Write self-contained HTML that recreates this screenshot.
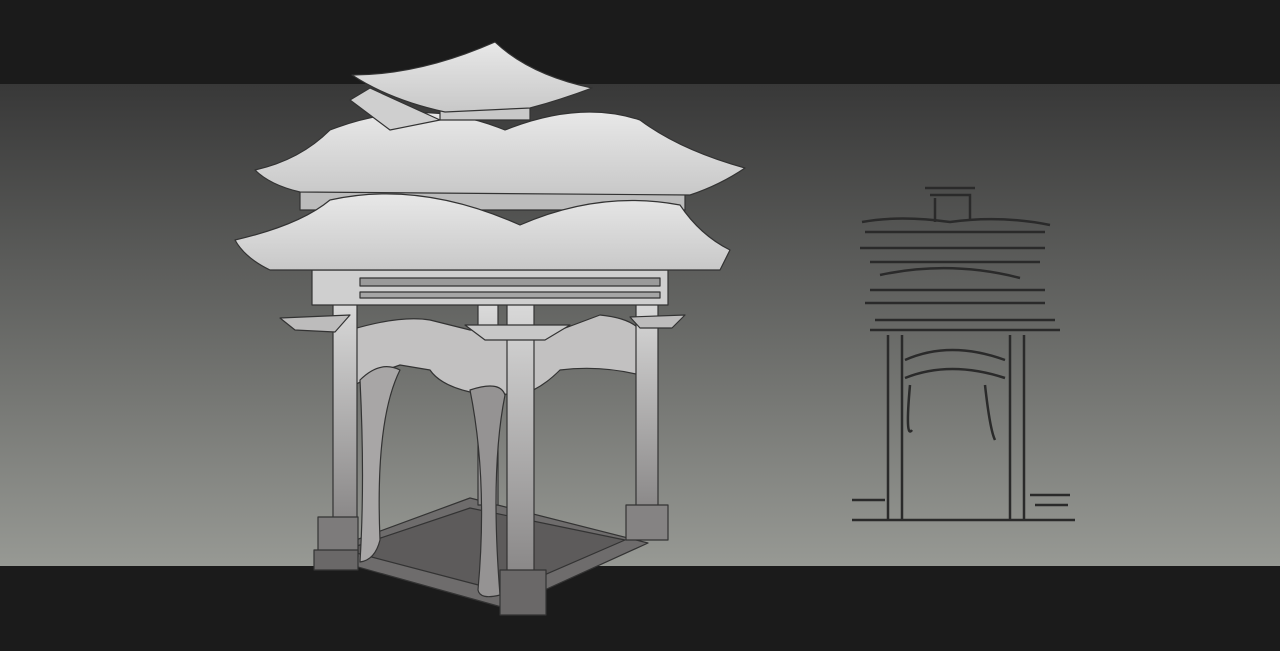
<!DOCTYPE html>
<html><head><meta charset="utf-8"><style>
html,body{margin:0;padding:0;background:#1b1b1b;width:1280px;height:651px;overflow:hidden}
svg{display:block}
</style></head><body>
<svg width="1280" height="651" viewBox="0 0 1280 651" xmlns="http://www.w3.org/2000/svg">
<defs>
<linearGradient id="bg" x1="0" y1="0" x2="0" y2="1">
<stop offset="0" stop-color="#383838"/><stop offset="1" stop-color="#979994"/>
</linearGradient>
<linearGradient id="col" x1="0" y1="0" x2="0" y2="1">
<stop offset="0" stop-color="#dadada"/><stop offset="1" stop-color="#8a8888"/>
</linearGradient>
<linearGradient id="roof" x1="0" y1="0" x2="0" y2="1">
<stop offset="0" stop-color="#e8e8e8"/><stop offset="1" stop-color="#c8c8c8"/>
</linearGradient>
</defs>
<rect x="0" y="0" width="1280" height="84" fill="#1b1b1b"/>
<rect x="0" y="84" width="1280" height="482" fill="url(#bg)"/>
<rect x="0" y="566" width="1280" height="85" fill="#1b1b1b"/>

<g stroke="#333" stroke-width="1.2" stroke-linejoin="round">
<polygon points="315,555 505,608 648,543 470,498" fill="#6e6c6c"/>
<polygon points="345,550 505,592 625,540 470,508" fill="#5d5b5b"/>
<rect x="478" y="305" width="20" height="200" fill="url(#col)"/>
<path d="M350,330 Q400,315 430,320 L470,330 L560,330 L600,315 Q630,318 640,330 L640,375 Q600,365 560,370 Q540,390 520,395 L470,392 Q440,385 430,370 L400,365 Q370,375 350,388 Z" fill="#c2c1c1"/>
<path d="M360,380 Q380,360 400,370 Q375,420 380,540 Q375,560 360,562 Q365,480 360,380Z" fill="#a8a6a6"/>
<path d="M470,390 Q500,380 505,395 Q490,470 500,595 Q480,600 478,590 Q488,480 470,390Z" fill="#959393"/>
<rect x="333" y="300" width="24" height="220" fill="url(#col)"/>
<rect x="636" y="298" width="22" height="212" fill="url(#col)"/>
<rect x="507" y="300" width="27" height="272" fill="url(#col)"/>
<rect x="318" y="517" width="40" height="40" fill="#7d7b7b"/>
<rect x="314" y="550" width="44" height="20" fill="#6a6868"/>
<rect x="626" y="505" width="42" height="35" fill="#858383"/>
<rect x="500" y="570" width="46" height="45" fill="#6a6868"/>
<path d="M280,318 L350,315 L335,332 L295,330Z" fill="#bdbcbc"/>
<path d="M630,317 L685,315 L672,328 L640,328Z" fill="#bdbcbc"/>
<path d="M465,325 L570,325 L545,340 L485,340Z" fill="#c8c8c8"/>
<rect x="312" y="270" width="356" height="35" fill="#cfcfcf"/>
<rect x="360" y="278" width="300" height="8" fill="#9a9a9a"/>
<rect x="360" y="292" width="300" height="6" fill="#a5a5a5"/>
<rect x="300" y="180" width="385" height="30" fill="#bcbcbc"/>
<path d="M235,240 Q300,225 330,200 Q420,180 520,225 Q600,190 680,205 Q700,235 730,250 L720,270 L270,270 Q245,258 235,240Z" fill="url(#roof)"/>
<path d="M255,170 Q300,160 330,130 Q420,95 505,130 Q580,100 640,120 Q680,150 745,168 Q720,185 690,195 L300,192 Q270,185 255,170Z" fill="url(#roof)"/>
<rect x="440" y="92" width="90" height="28" fill="#c8c8c8"/>
<path d="M350,100 L370,88 L440,120 L390,130Z" fill="#cfcfcf"/>
<path d="M352,75 Q420,75 495,42 Q530,75 592,88 Q560,100 530,108 L445,112 Q390,100 352,75Z" fill="url(#roof)"/>
</g>

<g stroke="#2a2a2a" stroke-width="2.5" fill="none">
<path d="M925,188 L975,188 M930,195 L970,195 L970,220 M935,198 L935,222"/>
<path d="M862,222 Q900,215 950,222 Q1000,215 1050,225 M865,232 L1045,232"/>
<path d="M860,248 L1045,248 M870,262 L1040,262 M880,275 Q950,260 1020,278 M870,290 L1045,290 M865,303 L1045,303"/>
<path d="M875,320 L1055,320 M870,330 L1060,330"/>
<path d="M888,335 L888,520 M902,335 L902,520 M1010,335 L1010,520 M1024,335 L1024,520"/>
<path d="M905,360 Q950,340 1005,360 M905,378 Q950,360 1005,378"/>
<path d="M910,385 Q905,440 912,430 M985,385 Q990,430 995,440"/>
<path d="M852,500 L885,500 M852,520 L1075,520 M1030,495 L1070,495 M1035,505 L1068,505"/>
</g>
</svg>
</body></html>
